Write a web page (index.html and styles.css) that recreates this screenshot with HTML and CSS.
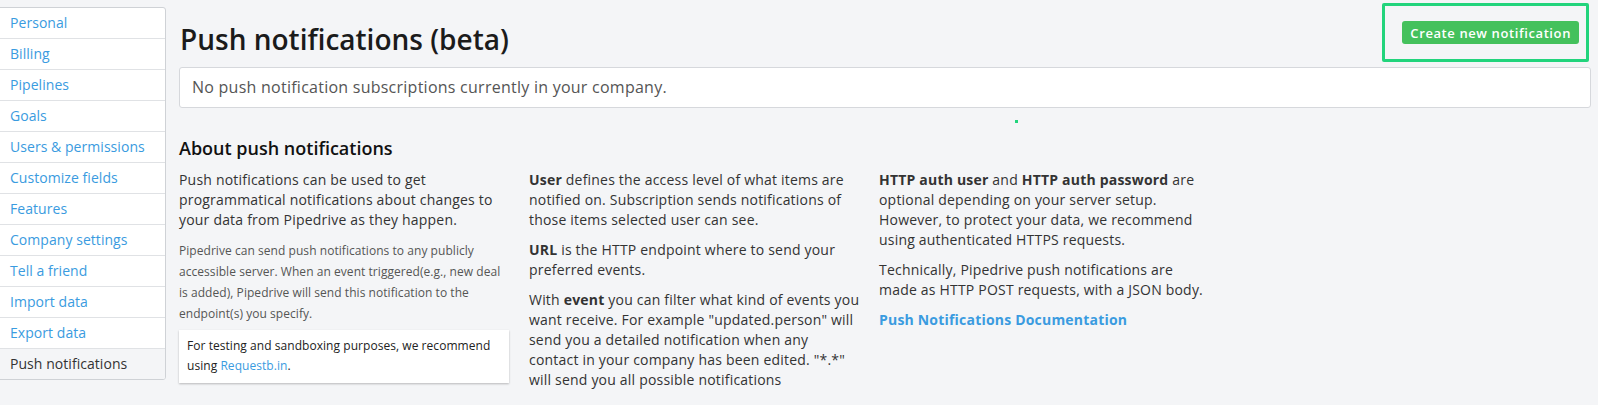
FILE: index.html
```html
<!DOCTYPE html>
<html>
<head>
<meta charset="utf-8">
<link rel="stylesheet" href="styles.css">
</head>
<body>
<div class="layout">
  <nav class="sidebar">
    <a class="nav-item" href="#">Personal</a>
    <a class="nav-item" href="#">Billing</a>
    <a class="nav-item" href="#">Pipelines</a>
    <a class="nav-item" href="#">Goals</a>
    <a class="nav-item" href="#">Users &amp; permissions</a>
    <a class="nav-item" href="#">Customize fields</a>
    <a class="nav-item" href="#">Features</a>
    <a class="nav-item" href="#">Company settings</a>
    <a class="nav-item" href="#">Tell a friend</a>
    <a class="nav-item" href="#">Import data</a>
    <a class="nav-item" href="#">Export data</a>
    <a class="nav-item active" href="#">Push notifications</a>
  </nav>
  <main class="main">
    <div class="header">
      <h1 class="title">Push notifications (beta)</h1>
      <div class="btn-wrap">
        <button class="btn">Create new notification</button>
        <span class="highlight"></span>
      </div>
    </div>
    <div class="empty">No push notification subscriptions currently in your company.</div>
    <span class="dot"></span>
    <h2 class="about">About push notifications</h2>
    <div class="cols">
      <div class="col first">
        <p class="lead">Push notifications can be used to get programmatical notifications about changes to your data from Pipedrive as they happen.</p>
        <p class="small">Pipedrive can send push notifications to any publicly accessible server. When an event triggered(e.g., new deal is added), Pipedrive will send this notification to the endpoint(s) you specify.</p>
        <div class="callout">For testing and sandboxing purposes, we recommend using <a href="#" class="link">Requestb.in</a>.</div>
      </div>
      <div class="col">
        <p><b>User</b> defines the access level of what items are notified on. Subscription sends notifications of those items selected user can see.</p>
        <p><b>URL</b> is the HTTP endpoint where to send your preferred events.</p>
        <p>With <b>event</b> you can filter what kind of events you want receive. For example "updated.person" will send you a detailed notification when any contact in your company has been edited. "*.*" will send you all possible notifications</p>
      </div>
      <div class="col">
        <p><b>HTTP auth user</b> and <b>HTTP auth password</b> are optional depending on your server setup. However, to protect your data, we recommend using authenticated HTTPS requests.</p>
        <p>Technically, Pipedrive push notifications are made as HTTP POST requests, with a JSON body.</p>
        <p><a href="#" class="doc-link">Push Notifications Documentation</a></p>
      </div>
    </div>
  </main>
</div>
</body>
</html>
```
FILE: styles.css
```css
html, body {
  margin: 0;
  padding: 0;
}
body {
  background: #f4f5f7;
  font-family: "Open Sans", "Noto Sans", sans-serif;
  color: #333;
  overflow: hidden;
}
.layout {
  display: flex;
  align-items: flex-start;
  padding-top: 7px;
}
.sidebar {
  width: 165px;
  margin-left: -1px;
  background: #fff;
  border: 1px solid #cfd2d6;
  border-radius: 0 3px 3px 0;
  display: flex;
  flex-direction: column;
  overflow: hidden;
}
.nav-item {
  display: block;
  height: 30px;
  line-height: 30px;
  padding-left: 10px;
  font-size: 14px;
  letter-spacing: 0.05px;
  color: #3a9be0;
  text-decoration: none;
  border-top: 1px solid #e0e2e5;
  white-space: nowrap;
}
.nav-item:first-child {
  border-top: none;
}
.nav-item.active {
  color: #333;
  background: #f4f5f7;
}
.main {
  flex: 1;
  margin-left: 13px;
  margin-right: 7px;
  position: relative;
}
.header {
  display: flex;
  justify-content: space-between;
  align-items: flex-start;
  height: 60px;
}
.title {
  margin: 12px 0 0 1px;
  font-size: 28px;
  font-weight: 600;
  line-height: 40px;
  color: #1b1b1b;
}
.btn-wrap {
  position: relative;
  margin-top: 14px;
  margin-right: 12px;
}
.btn {
  display: block;
  height: 23px;
  padding: 0 8px;
  border: none;
  border-radius: 3px;
  background: #44c15c;
  color: #fff;
  font-family: inherit;
  font-size: 13px;
  font-weight: 600;
  letter-spacing: 0.6px;
}
.highlight {
  position: absolute;
  left: -20px;
  top: -18px;
  right: -10px;
  bottom: -18px;
  border: 3px solid #22d47c;
  border-radius: 2px;
  pointer-events: none;
}
.empty {
  background: #fff;
  border: 1px solid #d6d8dc;
  border-radius: 3px;
  height: 39px;
  line-height: 39px;
  padding-left: 12px;
  font-size: 16px;
  letter-spacing: 0.25px;
  color: #555;
}
.dot {
  position: absolute;
  left: 836px;
  top: 113px;
  width: 3px;
  height: 3px;
  background: #22d47c;
}
.about {
  margin: 28px 0 10px 0;
  font-size: 18px;
  font-weight: 600;
  line-height: 24px;
  color: #111;
}
.cols {
  display: flex;
  gap: 18px;
}
.col {
  width: 332px;
  font-size: 14px;
  line-height: 20px;
  letter-spacing: 0.2px;
}
.col.first {
  width: 330px;
  margin-right: 2px;
}
.col p {
  margin: 0 0 10px 0;
}
.col b {
  font-weight: 700;
}
.small {
  font-size: 12px;
  line-height: 21px;
  letter-spacing: 0.05px;
  color: #555;
}
.col p.small {
  margin-top: 0;
  margin-bottom: 6px;
}
.callout {
  background: #fff;
  box-shadow: 0 1px 2px rgba(0,0,0,0.25);
  padding: 6px 8px 7px;
  font-size: 12px;
  line-height: 20px;
  letter-spacing: 0.05px;
  color: #222;
}
.link {
  color: #3a9be0;
  text-decoration: none;
}
.doc-link {
  color: #3a9be0;
  font-weight: 700;
  text-decoration: none;
}
```
